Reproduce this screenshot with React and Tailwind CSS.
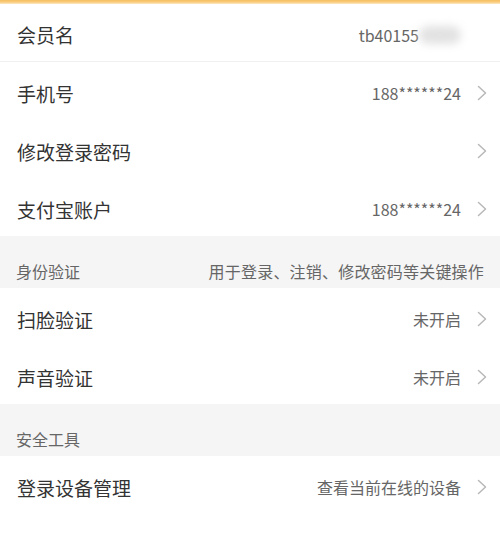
const FONT = { fontFamily: '"Noto Sans CJK SC", "Noto Sans", sans-serif' }

function Chevron() {
    return (
        <svg width="10" height="16" viewBox="0 0 10 16" fill="none" className="shrink-0">
            <polyline points="1.5,1.5 8.5,8 1.5,14.5" stroke="#b8b8b8" strokeWidth="1.5" strokeLinecap="round" strokeLinejoin="round" />
        </svg>
    )
}

function Row({ label, value, arrow = true, border = false, children }) {
    return (
        <div className={`h-[58px] flex items-center justify-between pt-[4px] pl-[17px] pr-[13px] bg-white ${border ? 'border-b border-[#f0f0f0]' : ''}`}>
            <span className="text-[19px] text-[#333] leading-none">{label}</span>
            <div className="flex items-center gap-[16px]">
                {children ?? <span className="text-[16px] text-[#666] leading-none">{value}</span>}
                {arrow ? <Chevron /> : <span className="w-[10px]" />}
            </div>
        </div>
    )
}

function Section({ title, hint }) {
    return (
        <div className="h-[52px] bg-[#f5f5f5] flex items-center justify-between pt-[18px] pl-[16px] pr-[16px]">
            <span className="text-[16px] text-[#666] leading-none">{title}</span>
            {hint && <span className="text-[16px] text-[#666] leading-none tracking-[0.2px]">{hint}</span>}
        </div>
    )
}

export default function App() {
    return (
        <div className="w-full min-h-screen bg-white" style={FONT}>
            <div className="h-[4px] bg-gradient-to-b from-[#f6bf5f] via-[#f9cb7c] to-[#fde9c6]" />

            <Row label="会员名" arrow={false} border>
                <div className="flex items-center">
                    <span className="text-[16px] text-[#666] leading-none">tb40155</span>
                    <span className="w-[42px] h-[18px] rounded-full bg-[#e2e2e2] blur-[4px]" />
                </div>
            </Row>
            <Row label="手机号" value="188******24" />
            <Row label="修改登录密码" value="" />
            <Row label="支付宝账户" value="188******24" />

            <Section title="身份验证" hint="用于登录、注销、修改密码等关键操作" />
            <Row label="扫脸验证" value="未开启" />
            <Row label="声音验证" value="未开启" />

            <Section title="安全工具" />
            <Row label="登录设备管理" value="查看当前在线的设备" />
        </div>
    )
}
